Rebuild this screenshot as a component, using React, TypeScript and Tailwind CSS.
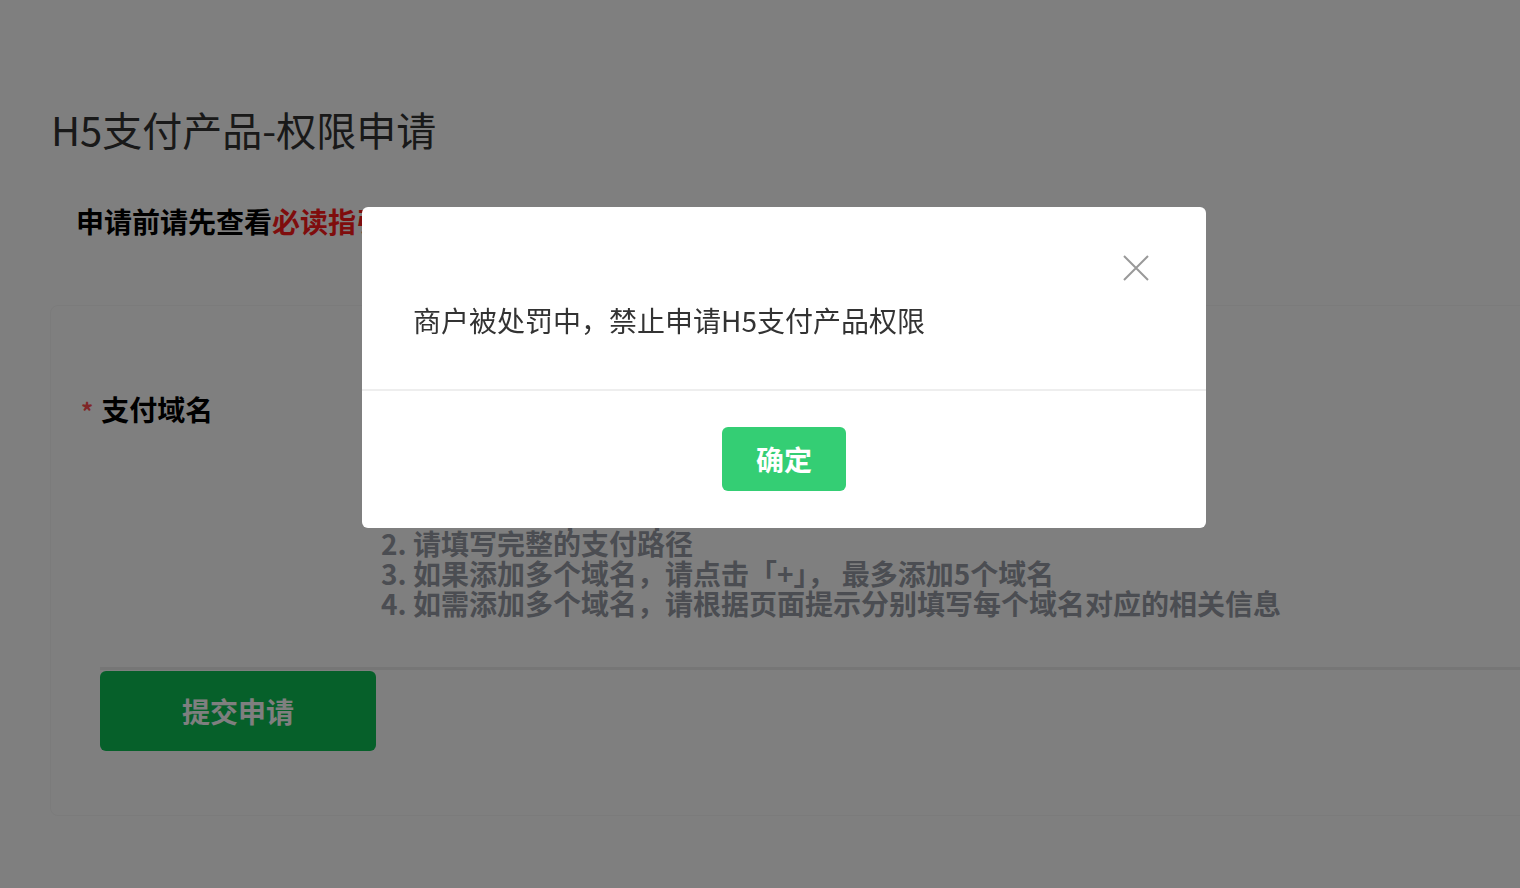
const tips = [
  "1. 请填写以http或https开头的完整域名",
  "2. 请填写完整的支付路径",
  "3. 如果添加多个域名，请点击「+」， 最多添加5个域名",
  "4. 如需添加多个域名，请根据页面提示分别填写每个域名对应的相关信息",
];

export default function App() {
  return (
    <div className="relative min-h-screen overflow-hidden bg-white font-['Noto_Sans_CJK_SC','Noto_Sans',sans-serif]">
      <div className="pl-[51px] pt-[105px]">
        <h1 className="text-[40px] leading-[48px] text-[#333]">H5支付产品-权限申请</h1>
      </div>

      <p className="ml-[76px] mt-[50px] text-[28px] font-bold leading-[36px] text-black">
        申请前请先查看<span className="text-[#ff1a1a]">必读指引</span>
      </p>

      <div className="ml-[50px] mt-[66px] w-[1520px] rounded-lg border border-[#f6f6f6] pt-[86px] pb-[64px]">
        <div className="flex pl-[30px]">
          <div className="w-[300px] shrink-0 text-[28px] font-bold leading-[34px] text-black">
            <span className="mr-[8px] text-[24px] text-[#ff4d4f]">*</span>支付域名
          </div>
          <div className="flex flex-col">
            <div className="h-[56px] w-[780px] rounded border border-[#ddd]" />
            <div className="mt-[50px] flex flex-col text-[28px] font-bold leading-[30px] text-[#979ba4]">
              {tips.map((t) => (
                <span key={t}>{t}</span>
              ))}
            </div>
          </div>
        </div>

        <div className="ml-[49px] mt-[49px] border-t-[3px] border-[#ececec] pt-px">
          <button className="flex h-[80px] w-[276px] items-center justify-center rounded-md bg-[#0dc055] text-[28px] font-bold text-white">
            提交申请
          </button>
        </div>
      </div>

      <div className="fixed inset-0 bg-black/50">
        <div className="absolute left-[362px] top-[207px] w-[844px] rounded-md bg-white">
          <div className="relative border-b-2 border-[#eeeeee] pl-[51px] pt-[95px] pb-[51px]">
            <p className="text-[28px] leading-[36px] text-[#333]">商户被处罚中，禁止申请H5支付产品权限</p>
            <button className="absolute right-[57px] top-[48px] text-[#999]">
              <svg width="26" height="26" viewBox="0 0 26 26" fill="none" stroke="currentColor" strokeWidth="2">
                <path d="M1 1L25 25M25 1L1 25" />
              </svg>
            </button>
          </div>
          <div className="flex justify-center pt-[36px] pb-[37px]">
            <button className="flex h-[64px] w-[124px] items-center justify-center rounded-md bg-[#34ce74] text-[28px] font-bold text-white">
              确定
            </button>
          </div>
        </div>
      </div>
    </div>
  );
}
